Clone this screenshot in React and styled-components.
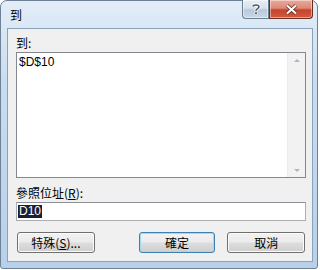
import React from "react";
import styled, { createGlobalStyle } from "styled-components";

const GlobalStyle = createGlobalStyle`
  html, body {
    margin: 0;
    padding: 0;
    background: #ffffff;
  }
  #root {
    width: 320px;
    height: 270px;
    overflow: hidden;
  }
`;

const cjk = `"Noto Sans CJK TC", "Noto Sans CJK SC", "Liberation Sans", sans-serif`;

const Window = styled.div`
  box-sizing: border-box;
  width: 318px;
  height: 269px;
  border: 1px solid #6f8196;
  border-radius: 7px 7px 3px 3px;
  background: linear-gradient(180deg, #e2edf8 0%, #cadcef 30%, #b8d0ea 100%);
  display: flex;
  flex-direction: column;
  padding: 0 4px 6px 6px;
  font-family: ${cjk};
`;

const TitleBar = styled.div`
  height: 27px;
  display: flex;
  align-items: flex-start;
  justify-content: space-between;
`;

const Title = styled.span`
  font-size: 12px;
  line-height: 12px;
  margin: 8px 0 0 3px;
  color: #000;
`;

const Caption = styled.div`
  display: flex;
  margin-top: -1px;
`;

const CapButton = styled.div`
  box-sizing: border-box;
  height: 19px;
  width: ${(p) => p.$w}px;
  display: flex;
  align-items: center;
  justify-content: center;
  border: 1px solid ${(p) => (p.$close ? "#6e2b20" : "#6d7d90")};
  border-top: none;
  border-radius: ${(p) => (p.$close ? "0 0 4px 0" : "0 0 0 4px")};
  background: ${(p) =>
    p.$close
      ? "linear-gradient(180deg, #eaa99b 0%, #dc8a78 45%, #c7432c 55%, #d05a3f 100%)"
      : "linear-gradient(180deg, #e7eef6 0%, #d6e1ec 45%, #b9c9d9 55%, #c9d8e6 100%)"};
  box-shadow: inset 0 0 0 1px rgba(255, 255, 255, 0.45);
`;

const Client = styled.div`
  flex: 1;
  box-sizing: border-box;
  background: #f0f0f0;
  border: 1px solid #8ba2bb;
  display: flex;
  flex-direction: column;
  padding: 5px 6px 0 8px;
`;

const Label = styled.div`
  font-size: 12px;
  line-height: 17px;
  color: #000;
  margin-top: ${(p) => p.$top || 0}px;
  height: 17px;
`;

const ListBox = styled.div`
  box-sizing: border-box;
  height: 126px;
  margin-top: 1px;
  border: 1px solid #828790;
  background: #fff;
  display: flex;
`;

const ListItems = styled.div`
  flex: 1;
  padding: 2px 2px;
  font-family: "Liberation Sans", sans-serif;
  font-size: 12px;
  line-height: 15px;
`;

const ScrollBar = styled.div`
  width: 17px;
  background: #f2f2f2;
  border-left: 1px solid #ececec;
  display: flex;
  flex-direction: column;
  justify-content: space-between;
  align-items: center;
  padding: 6px 0 5px;
`;

const Arrow = styled.div`
  width: 0;
  height: 0;
  border-left: 3px solid transparent;
  border-right: 3px solid transparent;
  ${(p) =>
    p.$down ? "border-top: 3px solid #b4b4b4;" : "border-bottom: 3px solid #b4b4b4;"}
`;

const Input = styled.div`
  box-sizing: border-box;
  height: 19px;
  margin-top: 1px;
  border: 1px solid #abadb3;
  border-top-color: #8e9197;
  background: #fff;
  padding: 2px 1px;
  display: flex;
  align-items: center;
`;

const Selected = styled.span`
  background: #1b1f33;
  color: #fff;
  font-family: "Liberation Sans", sans-serif;
  font-size: 12px;
  line-height: 13px;
  padding: 0 1px;
`;

const ButtonRow = styled.div`
  display: flex;
  margin-top: 11px;
  padding-right: 1px;
`;

const Button = styled.div`
  box-sizing: border-box;
  width: ${(p) => p.$w}px;
  height: 21px;
  margin-left: ${(p) => p.$ml || 0}px;
  border: 1px solid ${(p) => (p.$default ? "#3c7fb1" : "#707070")};
  border-radius: 3px;
  background: linear-gradient(180deg, #f2f2f2 0%, #ebebeb 48%, #dddddd 52%, #cfcfcf 100%);
  box-shadow: inset 0 0 0 1px ${(p) => (p.$default ? "#a6d7f2" : "#fbfbfb")};
  display: flex;
  align-items: center;
  justify-content: center;
  font-size: 12px;
  color: #000;
`;

const U = styled.span`
  text-decoration: underline;
`;

function QuestionGlyph() {
  return (
    <svg width="10" height="12" viewBox="0 0 10 12">
      <path
        d="M2 3.5 C2 1.5 8 1.2 8 3.8 C8 5.6 5 5.6 5 7.8"
        fill="none"
        stroke="#fff"
        strokeWidth="3.2"
      />
      <path
        d="M2 3.5 C2 1.5 8 1.2 8 3.8 C8 5.6 5 5.6 5 7.8"
        fill="none"
        stroke="#46566a"
        strokeWidth="1.5"
      />
      <rect x="3.8" y="9" width="2.4" height="2.4" fill="#46566a" stroke="#fff" strokeWidth="0.6" />
    </svg>
  );
}

function CloseGlyph() {
  return (
    <svg width="13" height="11" viewBox="0 0 13 11">
      <path d="M2 1.5 L11 9.5 M11 1.5 L2 9.5" stroke="#5a1d14" strokeWidth="3.6" />
      <path d="M2 1.5 L11 9.5 M11 1.5 L2 9.5" stroke="#ffffff" strokeWidth="2.2" />
    </svg>
  );
}

export default function App() {
  return (
    <>
      <GlobalStyle />
      <Window>
        <TitleBar>
          <Title>到</Title>
          <Caption>
            <CapButton $w={27}>
              <QuestionGlyph />
            </CapButton>
            <CapButton $w={44} $close>
              <CloseGlyph />
            </CapButton>
          </Caption>
        </TitleBar>
        <Client>
          <Label>到:</Label>
          <ListBox>
            <ListItems>$D$10</ListItems>
            <ScrollBar>
              <Arrow />
              <Arrow $down />
            </ScrollBar>
          </ListBox>
          <Label $top={6}>
            參照位址(<U>R</U>):
          </Label>
          <Input>
            <Selected>D10</Selected>
          </Input>
          <ButtonRow>
            <Button $w={78} $ml={1}>
              特殊(<U>S</U>)...
            </Button>
            <Button $w={77} $ml={44} $default>
              確定
            </Button>
            <Button $w={78} $ml={12}>
              取消
            </Button>
          </ButtonRow>
        </Client>
      </Window>
    </>
  );
}
